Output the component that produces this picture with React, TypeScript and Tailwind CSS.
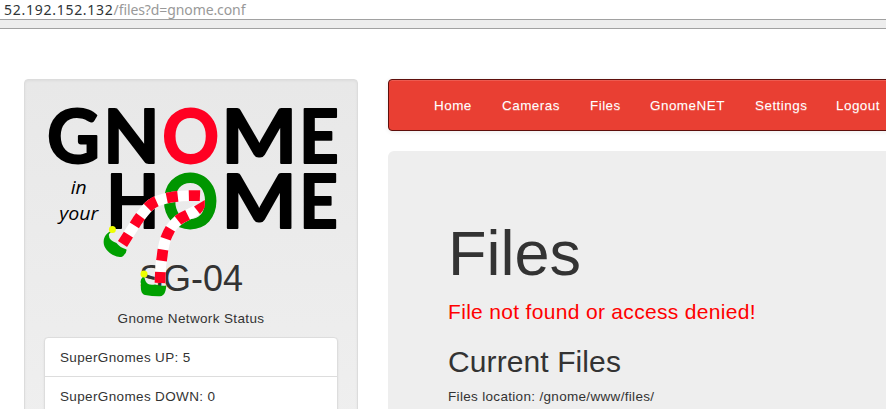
import React from "react";

type GlyphProps = { ch: string; x: number; y: number; w: number; color?: string };

function Glyph({ ch, x, y, w, color = "#000" }: GlyphProps) {
  return (
    <text
      x={x}
      y={y}
      textLength={w}
      lengthAdjust="spacingAndGlyphs"
      fill={color}
      stroke={color}
      strokeWidth={2}
      strokeLinejoin="round"
      fontSize={75}
      fontWeight={700}
      fontFamily="Lato, sans-serif"
    >
      {ch}
    </text>
  );
}

function Logo() {
  const leg1 = "M200 195.7 C190 195.3 181 195.6 172.7 197 C164 198.5 157 200 151.7 204 C146 208 141.5 215 137.3 220.7 L122.5 244";
  const leg2 = "M204 205 L192.7 212.3 L182.7 217.3 C178 220 176 222 173.3 225 C170.5 228 169.5 230.5 168 233.3 C166 237.5 165.3 239.5 164.3 243.3 C163 249 162.7 251 162.3 255 L160.7 266 L160 283";
  return (
    <svg viewBox="44 99 294 200" className="relative z-10 block h-[200px] w-[294px] shrink-0" aria-label="Gnome in your Home">
      <Glyph ch="G" x={47} y={163} w={53} />
      <Glyph ch="N" x={103.2} y={163} w={56.4} />
      <Glyph ch="O" x={162.3} y={163} w={56.8} color="#ff0022" />
      <Glyph ch="M" x={221.3} y={163} w={76} />
      <Glyph ch="E" x={299.1} y={163} w={39.8} />
      <Glyph ch="H" x={106.3} y={228} w={53.1} />
      <Glyph ch="O" x={162.3} y={228} w={55.9} color="#009600" />
      <Glyph ch="M" x={221.4} y={228} w={75.3} />
      <Glyph ch="E" x={299.2} y={228} w={38.6} />
      <g fontFamily="'Open Sans', sans-serif" fontStyle="italic" fontSize={19} fill="#000">
        <text x={70.7} y={193.5} textLength={16} lengthAdjust="spacingAndGlyphs">in</text>
        <text x={59.3} y={220} textLength={39} lengthAdjust="spacingAndGlyphs">your</text>
      </g>
      <g fill="none" strokeWidth={10.8}>
        <path d={leg1} stroke="#fff" />
        <path d={leg1} stroke="#ff0022" pathLength={99} strokeDasharray="11 11" />
        <path d="M197 210 L192.7 212.3 L182.7 217.3 C178 220 176 222 173.3 225 C170.5 228 169.5 230.5 168 233.3 C166 237.5 165.3 239.5 164.3 243.3 C163 249 162.7 251 162.3 255 L160.7 266 L160 283" stroke="#fff" />
        <path d={leg2} stroke="#ff0022" pathLength={96.6} strokeDasharray="0 19 11 11.2 11 11.2 11 11.2 11 0" />
      </g>
      <path d="M204.8 200 V207 Q203 211 200 214 L194 206.5 Z" fill="#ff0022" />
      <path d="M112.5 230.5 C107 232 103.8 237 103.7 241 C103 247 108 252 113 255 Q119 258 122.5 256.5 Q127 253 126.5 249.5 Q120 247.5 116.5 243 Q108 240 109 234 Z" fill="#00a000" />
      <circle cx={112.4} cy={229.4} r={3.5} fill="#eeff00" />
      <path d="M144 276 Q139.5 279 141 284 C140.5 289 141 294 145 295 Q153 296.5 160 296.3 C165 296 166 290 166.3 285.5 Q162 286.5 155 284.5 Q148 286 145.5 281 Z" fill="#00a000" />
      <circle cx={144} cy={274.1} r={3.5} fill="#eeff00" />
    </svg>
  );
}

const links = [
  { label: "Home", width: "w-[68px]" },
  { label: "Cameras", width: "w-[88px]" },
  { label: "Files", width: "w-[60px]" },
  { label: "GnomeNET", width: "w-[105px]" },
  { label: "Settings", width: "w-[81px]" },
  { label: "Logout", width: "w-[75px]" },
];

export default function App() {
  return (
    <div className="flex h-[409px] w-[886px] flex-col overflow-hidden bg-white font-['Liberation_Sans',Arial,sans-serif] text-[13.5px] leading-5 text-[#333]">
      <div className="h-[19px] shrink-0 whitespace-nowrap pl-1 font-['Noto_Sans',sans-serif] text-[14px] leading-[19px] text-[#999]">
        <span className="tracking-[0.73px] text-[#2e3436]">52.192.152.132</span>
        <span className="tracking-[-0.1px]">/files?d=gnome.conf</span>
      </div>
      <div className="h-[10px] shrink-0 border-y border-[#a1a1a1] bg-[#ededed]" />
      <div className="flex gap-[30px] pl-6 pt-[50px]">
        <aside className="h-[640px] w-[334px] shrink-0 rounded-[4px] border border-[#dcdcdc] bg-linear-to-b from-[#e8e8e8] to-[#f5f5f5] px-[19px] pt-[19px] shadow-[inset_0_1px_3px_rgba(0,0,0,0.05),0_1px_0_rgba(255,255,255,0.1)]">
          <Logo />
          <h1 className="-mt-[40px] text-center text-[36px] leading-[40px]">SG-04</h1>
          <p className="mt-[10px] text-center tracking-[0.36px]">Gnome Network Status</p>
          <ul className="mt-[8px] rounded-[4px] border border-[#ddd] bg-white shadow-[0_1px_2px_rgba(0,0,0,0.075)]">
            <li className="h-[39px] border-b border-[#ddd] px-[15px] pt-[10px] tracking-[0.36px]">SuperGnomes UP: 5</li>
            <li className="h-[39px] px-[15px] pt-[10px] tracking-[0.36px]">SuperGnomes DOWN: 0</li>
          </ul>
        </aside>
        <main className="w-[750px] shrink-0">
          <nav className="flex h-[52px] rounded-[4px] border border-[#5e0f0c] bg-[#e93f33] pl-[30px] shadow-[inset_0_1px_0_rgba(255,255,255,0.15),0_1px_5px_rgba(0,0,0,0.075)]">
            {links.map((link) => (
              <a key={link.label} className={`${link.width} shrink-0 pl-[15px] pt-4 tracking-[0.45px] text-white [text-shadow:0_1px_0_rgba(255,255,255,0.25)]`}>
                {link.label}
              </a>
            ))}
          </nav>
          <section className="mt-5 h-[500px] rounded-[6px] bg-[#eee] px-[60px] pt-[68px]">
            <h1 className="text-[63px] leading-[69px]">Files</h1>
            <p className="mt-[9px] text-[21px] leading-[30px] tracking-[0.32px] text-[#f00]">File not found or access denied!</p>
            <h2 className="mt-[18px] text-[30px] leading-[33px] tracking-[0.1px]">Current Files</h2>
            <p className="mt-[9px] tracking-[0.32px]">Files location: /gnome/www/files/</p>
          </section>
        </main>
      </div>
    </div>
  );
}
